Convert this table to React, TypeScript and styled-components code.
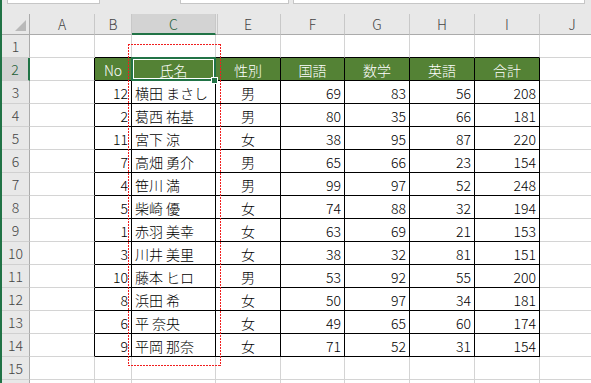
import React from "react";
import styled, { createGlobalStyle, css } from "styled-components";

const GlobalStyle = createGlobalStyle`
  html, body {
    margin: 0;
    padding: 0;
    background: #ffffff;
  }
  body {
    font-family: "Noto Sans CJK JP", "Noto Sans", sans-serif;
  }
`;

type Align = "left" | "center" | "right";
type Line = "grid" | "black";

const COLS = [
  { key: "A", width: 65, align: "left" as Align },
  { key: "B", width: 37, align: "right" as Align },
  { key: "C", width: 84, align: "left" as Align },
  { key: "E", width: 65, align: "center" as Align },
  { key: "F", width: 64, align: "right" as Align },
  { key: "G", width: 65, align: "right" as Align },
  { key: "H", width: 65, align: "right" as Align },
  { key: "I", width: 65, align: "right" as Align },
  { key: "J", width: 65, align: "left" as Align },
];

const HEADER = ["No", "氏名", "性別", "国語", "数学", "英語", "合計"];

const DATA: (string | number)[][] = [
  [12, "横田 まさし", "男", 69, 83, 56, 208],
  [2, "葛西 祐基", "男", 80, 35, 66, 181],
  [11, "宮下 涼", "女", 38, 95, 87, 220],
  [7, "高畑 勇介", "男", 65, 66, 23, 154],
  [4, "笹川 満", "男", 99, 97, 52, 248],
  [5, "柴崎 優", "女", 74, 88, 32, 194],
  [1, "赤羽 美幸", "女", 63, 69, 21, 153],
  [3, "川井 美里", "女", 38, 32, 81, 151],
  [10, "藤本 ヒロ", "男", 53, 92, 55, 200],
  [8, "浜田 希", "女", 50, 97, 34, 181],
  [6, "平 奈央", "女", 49, 65, 60, 174],
  [9, "平岡 那奈", "女", 71, 52, 31, 154],
];

// 15 numbered rows are visible, the 16th only shows its top edge
const ROW_COUNT = 16;
const LAST_LABELLED_ROW = 15;
const SELECTED_ROW = 2;
const SELECTED_COL = "C";

const Sheet = styled.div`
  position: relative;
  width: 591px;
  height: 383px;
  overflow: hidden;
  box-sizing: border-box;
  border-left: 2px solid #217346;
  background: #ffffff;
`;

const TopStrip = styled.div`
  display: flex;
  align-items: flex-start;
  height: 14px;
  background: #e8e8e8;
`;

const BarBox = styled.div<{ $gap: number; $width: number }>`
  box-sizing: border-box;
  height: 4px;
  margin-left: ${p => p.$gap}px;
  width: ${p => p.$width}px;
  background: #ffffff;
  border: 1px solid #c6c6c6;
  border-top: none;
`;

const Grid = styled.div`
  display: grid;
  grid-template-columns: 28px ${COLS.map(c => `${c.width}px`).join(" ")};
  grid-template-rows: 21px repeat(${ROW_COUNT}, 23px);
`;

const Corner = styled.div`
  position: relative;
  box-sizing: border-box;
  background: #e8e8e8;
  border-right: 1px solid #ababab;
  border-bottom: 1px solid #ababab;

  &::after {
    content: "";
    position: absolute;
    right: 3px;
    bottom: 3px;
    width: 0;
    height: 0;
    border-left: 11px solid transparent;
    border-bottom: 11px solid #b9b9b9;
  }
`;

const ColHead = styled.div<{ $selected?: boolean; $afterHidden?: boolean }>`
  box-sizing: border-box;
  display: flex;
  align-items: center;
  justify-content: center;
  font-size: 14px;
  font-weight: 300;
  color: #444444;
  background: #e8e8e8;
  border-right: 1px solid #c8c8c8;
  border-bottom: 1px solid #ababab;
  ${p =>
    p.$afterHidden &&
    css`
      background: linear-gradient(
          to right,
          transparent 1px,
          #c8c8c8 1px,
          #c8c8c8 2px,
          transparent 2px
        ),
        #e8e8e8;
    `}
  ${p =>
    p.$selected &&
    css`
      background: #d3d3d3;
      color: #1d5e36;
      border-bottom: 2px solid #217346;
    `}
`;

const RowHead = styled.div<{ $selected?: boolean }>`
  box-sizing: border-box;
  display: flex;
  align-items: center;
  justify-content: center;
  font-size: 14px;
  font-weight: 300;
  color: #444444;
  background: #e8e8e8;
  border-right: 1px solid #ababab;
  border-bottom: 1px solid #d0d0d0;
  ${p =>
    p.$selected &&
    css`
      background: #d3d3d3;
      color: #1d5e36;
      border-right: 2px solid #217346;
    `}
`;

const Cell = styled.div<{
  $align: Align;
  $head?: boolean;
  $right: Line;
  $bottom: Line;
}>`
  box-sizing: border-box;
  display: flex;
  align-items: center;
  justify-content: ${p =>
    p.$align === "left" ? "flex-start" : p.$align === "right" ? "flex-end" : "center"};
  padding: 1px 3px 0 3px;
  font-size: 14px;
  font-weight: 300;
  white-space: nowrap;
  overflow: hidden;
  color: #000000;
  background: #ffffff;
  border-right: 1px solid ${p => (p.$right === "black" ? "#000000" : "#d4d4d4")};
  border-bottom: 1px solid ${p => (p.$bottom === "black" ? "#000000" : "#d4d4d4")};
  ${p =>
    p.$head &&
    css`
      justify-content: center;
      background: #548235;
      color: #ffffff;
    `}
`;

const ActiveCell = styled.div`
  position: absolute;
  left: 129px;
  top: 57px;
  width: 85px;
  height: 24px;
  box-sizing: border-box;
  border: 2px solid #217346;
  box-shadow: inset 0 0 0 1px #ffffff;
  pointer-events: none;
`;

const FillHandle = styled.div`
  position: absolute;
  left: 209px;
  top: 77px;
  width: 7px;
  height: 7px;
  box-sizing: border-box;
  background: #217346;
  border: 1px solid #ffffff;
`;

const Marquee = styled.div`
  position: absolute;
  left: 126px;
  top: 44px;
  width: 93px;
  height: 322px;
  pointer-events: none;
  background:
    repeating-linear-gradient(90deg, #f01e1e 0 2px, transparent 2px 3px) top left / 100% 1px no-repeat,
    repeating-linear-gradient(90deg, #f01e1e 0 2px, transparent 2px 3px) bottom left / 100% 1px no-repeat,
    repeating-linear-gradient(180deg, #f01e1e 0 2px, transparent 2px 3px) top left / 1px 100% no-repeat,
    repeating-linear-gradient(180deg, #f01e1e 0 2px, transparent 2px 3px) top right / 1px 100% no-repeat;
`;

const cellValue = (row: number, col: number): React.ReactNode => {
  // table occupies B2:I14 -> col index 1..7
  if (col < 1 || col > 7) return null;
  if (row === 2) return HEADER[col - 1];
  const rec = DATA[row - 3];
  return rec ? rec[col - 1] : null;
};

const App = () => {
  const rows = Array.from({ length: ROW_COUNT }, (_, i) => i + 1);

  return (
    <>
      <GlobalStyle />
      <Sheet>
        <TopStrip>
          <BarBox $gap={5} $width={93} />
          <BarBox $gap={80} $width={109} />
          <BarBox $gap={4} $width={292} />
        </TopStrip>
        <Grid>
          <Corner />
          {COLS.map(c => (
            <ColHead key={c.key} $selected={c.key === SELECTED_COL} $afterHidden={c.key === "E"}>
              {c.key}
            </ColHead>
          ))}
          {rows.map(r => (
            <React.Fragment key={r}>
              <RowHead $selected={r === SELECTED_ROW}>{r <= LAST_LABELLED_ROW ? r : null}</RowHead>
              {COLS.map((c, ci) => {
                const inRows = r >= 2 && r <= 14;
                const inCols = ci >= 1 && ci <= 7;
                return (
                  <Cell
                    key={c.key}
                    $align={c.align}
                    $head={r === 2 && inCols}
                    $right={inRows && ci <= 7 ? "black" : "grid"}
                    $bottom={inCols && r >= 1 && r <= 14 ? "black" : "grid"}
                  >
                    {cellValue(r, ci)}
                  </Cell>
                );
              })}
            </React.Fragment>
          ))}
        </Grid>
        <Marquee />
        <ActiveCell />
        <FillHandle />
      </Sheet>
    </>
  );
};

export default App;
